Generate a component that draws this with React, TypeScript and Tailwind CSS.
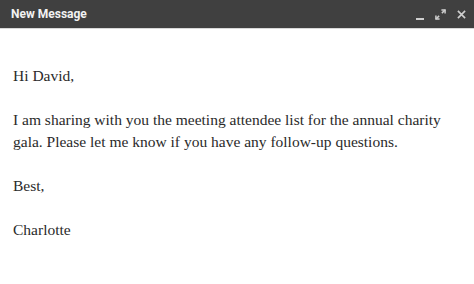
import React from 'react';

const ExpandIcon = () => (
  <svg width="11" height="11" viewBox="0 0 12 12" fill="none" stroke="currentColor" strokeWidth="1.6">
    <path d="M7 1h4v4" />
    <path d="M11 1L7.5 4.5" />
    <path d="M5 11H1V7" />
    <path d="M1 11l3.5-3.5" />
  </svg>
);

const CloseIcon = () => (
  <svg width="9" height="9" viewBox="0 0 10 10" fill="none" stroke="currentColor" strokeWidth="1.8">
    <path d="M1 1l8 8M9 1L1 9" />
  </svg>
);

export default function App() {
  return (
    <div className="w-[474px] h-[284px] bg-white overflow-hidden">
      {/* header */}
      <div className="h-[29px] bg-[#404040] border-b border-[#d8d8d8] flex items-center justify-between pl-[11px] pr-[8px]">
        <span className="text-[#f2f2f2] font-bold text-[12px] font-['Roboto',Arial,sans-serif]">New Message</span>
        <div className="flex items-center gap-[11px] text-[#cfcfcf]">
          <div className="w-[8px] h-[2px] bg-[#cfcfcf] mt-[10px]" />
          <ExpandIcon />
          <CloseIcon />
        </div>
      </div>

      {/* body */}
      <div className="pl-[13px] pr-[4px] pt-[36px] text-[#2a2a2a] text-[15.5px] leading-[22px] font-['Liberation_Serif','Times_New_Roman',serif]">
        <p>Hi David,</p>
        <p className="mt-[22px] max-w-[446px]">
          I am sharing with you the meeting attendee list for the annual charity gala. Please let me know if you have any follow-up questions.
        </p>
        <p className="mt-[22px]">Best,</p>
        <p className="mt-[22px]">Charlotte</p>
      </div>
    </div>
  );
}
